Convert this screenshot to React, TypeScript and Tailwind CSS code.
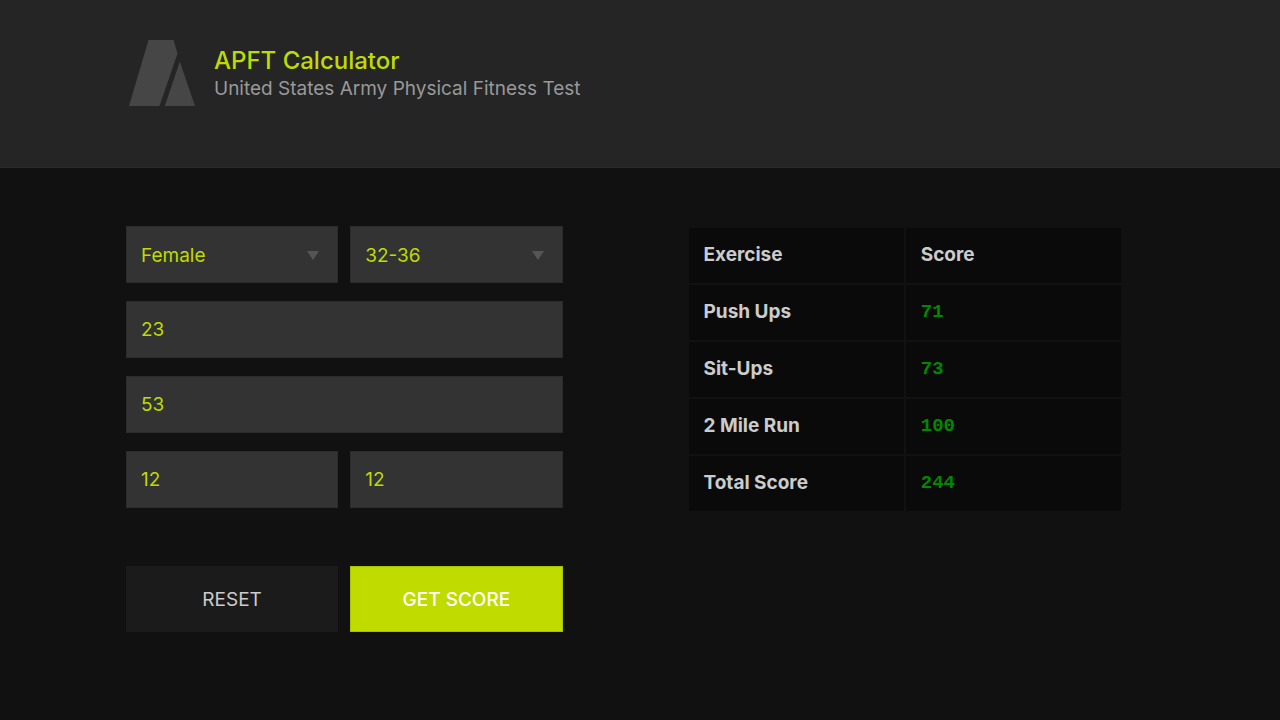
import { useState } from 'react';
import type { FormEvent, ReactNode } from 'react';

const FIELD =
  'block w-full h-[57px] appearance-none rounded-none border border-[#2c2c2c] bg-[#333333] px-3.5 text-[19px] text-[#bfdb00] outline-none focus:border-[#bfdb00]';

const DEFAULTS = {
  gender: 'Female',
  age: '32-36',
  pushUps: '23',
  sitUps: '53',
  minutes: '12',
  seconds: '12',
};

const AGE_GROUPS = ['17-21', '22-26', '27-31', '32-36', '37-41', '42-46', '47-51', '52-56', '57-61', '62+'];

const SCORES = [
  { exercise: 'Push Ups', score: 71 },
  { exercise: 'Sit-Ups', score: 73 },
  { exercise: '2 Mile Run', score: 100 },
  { exercise: 'Total Score', score: 244 },
];

function Logo() {
  return (
    <svg className="h-[66px] w-[66px] shrink-0" viewBox="0 0 66 66" fill="#464646" aria-hidden="true">
      <path d="M19.5 0H44.5L48.5 13.5L30.5 66H0Z" />
      <path d="M50.8 21.5L66 66H35.8Z" />
    </svg>
  );
}

interface SelectFieldProps {
  label: string;
  value: string;
  options: string[];
  onChange: (value: string) => void;
}

function SelectField({ label, value, options, onChange }: SelectFieldProps) {
  return (
    <div className="relative">
      <select
        aria-label={label}
        className={`${FIELD} pt-[3px]`}
        value={value}
        onChange={(e) => onChange(e.target.value)}
      >
        {options.map((option) => (
          <option key={option}>{option}</option>
        ))}
      </select>
      {/* Custom arrow */}
      <svg
        className="pointer-events-none absolute right-[19px] top-[25px] h-[9px] w-3"
        viewBox="0 0 12 9"
        fill="#555555"
        aria-hidden="true"
      >
        <path d="M0 0H12L6 9Z" />
      </svg>
    </div>
  );
}

interface NumberFieldProps {
  label: string;
  value: string;
  onChange: (value: string) => void;
}

function NumberField({ label, value, onChange }: NumberFieldProps) {
  return (
    <input
      type="text"
      inputMode="numeric"
      aria-label={label}
      className={FIELD}
      value={value}
      onChange={(e) => onChange(e.target.value)}
    />
  );
}

function Row({ children }: { children: ReactNode }) {
  return <div className="grid grid-cols-2 gap-3">{children}</div>;
}

export default function App() {
  const [form, setForm] = useState(DEFAULTS);
  const [showScore, setShowScore] = useState(true);

  const set = (key: keyof typeof DEFAULTS) => (value: string) =>
    setForm((prev) => ({ ...prev, [key]: value }));

  const handleSubmit = (e: FormEvent) => {
    e.preventDefault();
    setShowScore(true);
  };

  const handleReset = () => {
    setForm({ ...DEFAULTS, pushUps: '', sitUps: '', minutes: '', seconds: '' });
    setShowScore(false);
  };

  return (
    <div className="min-h-screen bg-[#111111] font-['Inter',sans-serif] text-[19px] text-[#cccccc]">
      <header className="flex items-start gap-[19px] border-b border-[#2a2a2a] bg-[#252525] px-[129px] pt-10 pb-[61px]">
        <Logo />
        <div className="pt-[7px]">
          <h1 className="text-[24px] leading-7 font-medium text-[#bfdb00]">APFT Calculator</h1>
          <p className="leading-7 text-[#999999]">United States Army Physical Fitness Test</p>
        </div>
      </header>

      <main className="grid items-start gap-[124px] pt-[58px] pr-[157px] pb-20 pl-[126px] md:grid-cols-2">
        <form onSubmit={handleSubmit}>
          <div className="flex flex-col gap-[18px]">
            <Row>
              <SelectField
                label="Gender"
                value={form.gender}
                options={['Male', 'Female']}
                onChange={set('gender')}
              />
              <SelectField label="Age group" value={form.age} options={AGE_GROUPS} onChange={set('age')} />
            </Row>
            <NumberField label="Push ups" value={form.pushUps} onChange={set('pushUps')} />
            <NumberField label="Sit-ups" value={form.sitUps} onChange={set('sitUps')} />
            <Row>
              <NumberField label="Run minutes" value={form.minutes} onChange={set('minutes')} />
              <NumberField label="Run seconds" value={form.seconds} onChange={set('seconds')} />
            </Row>
          </div>

          <div className="mt-[58px] grid grid-cols-2 gap-3">
            <button type="button" onClick={handleReset} className="h-[66px] bg-[#1b1b1b] pt-0.5 text-[#cccccc]">
              RESET
            </button>
            <button
              type="submit"
              className="h-[66px] border border-[#a9c200] bg-[#bfdb00] pt-0.5 font-medium text-white"
            >
              GET SCORE
            </button>
          </div>
        </form>

        <table className="w-full table-fixed border-separate border-spacing-0.5 text-left">
          <thead>
            <tr>
              <th className="h-[55px] bg-[#0a0a0a] px-[15px] font-bold">Exercise</th>
              <th className="h-[55px] bg-[#0a0a0a] px-[15px] font-bold">Score</th>
            </tr>
          </thead>
          <tbody>
            {SCORES.map(({ exercise, score }) => (
              <tr key={exercise}>
                <th className="h-[55px] bg-[#0a0a0a] px-[15px] font-bold">{exercise}</th>
                <td className="h-[55px] bg-[#0a0a0a] px-[15px] font-['Liberation_Mono',monospace] font-bold text-[#008800]">
                  {showScore ? score : ''}
                </td>
              </tr>
            ))}
          </tbody>
        </table>
      </main>
    </div>
  );
}
